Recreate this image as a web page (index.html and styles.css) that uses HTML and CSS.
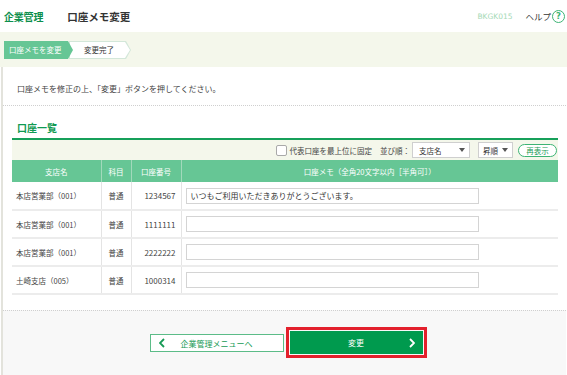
FILE: index.html
```html
<!DOCTYPE html>
<html lang="ja">
<head>
<meta charset="utf-8">
<title>口座メモ変更</title>
<link rel="stylesheet" href="styles.css">
</head>
<body>
<header class="top">
  <span class="brand">企業管理</span>
  <span class="title">口座メモ変更</span>
  <span class="code">BKGK015</span>
  <span class="help">ヘルプ<span class="help-icon">?</span></span>
</header>
<div class="band">
  <ol class="steps">
    <li class="step step-cur">口座メモを変更</li>
    <li class="step step-next"><span class="step-in">変更完了</span></li>
  </ol>
</div>
<main class="page">
  <p class="lead">口座メモを修正の上、「変更」ボタンを押してください。</p>
  <section class="list">
    <h2 class="list-title">口座一覧</h2>
    <div class="tools">
      <span class="check"></span>
      <span class="check-label">代表口座を最上位に固定</span>
      <span class="sort-label">並び順：</span>
      <span class="select select-wide">支店名<span class="caret"></span></span>
      <span class="select select-narrow">昇順<span class="caret"></span></span>
      <span class="pill">再表示</span>
    </div>
    <table class="accounts">
      <thead>
        <tr>
          <th class="c-branch">支店名</th>
          <th class="c-kind">科目</th>
          <th class="c-no">口座番号</th>
          <th class="c-memo">口座メモ（全角20文字以内［半角可］）</th>
        </tr>
      </thead>
      <tbody>
        <tr>
          <td class="c-branch">本店営業部（001）</td>
          <td class="c-kind">普通</td>
          <td class="c-no">1234567</td>
          <td class="c-memo"><input class="memo" type="text" value="いつもご利用いただきありがとうございます。"></td>
        </tr>
        <tr>
          <td class="c-branch">本店営業部（001）</td>
          <td class="c-kind">普通</td>
          <td class="c-no">1111111</td>
          <td class="c-memo"><input class="memo" type="text" value=""></td>
        </tr>
        <tr>
          <td class="c-branch">本店営業部（001）</td>
          <td class="c-kind">普通</td>
          <td class="c-no">2222222</td>
          <td class="c-memo"><input class="memo" type="text" value=""></td>
        </tr>
        <tr>
          <td class="c-branch">土崎支店（005）</td>
          <td class="c-kind">普通</td>
          <td class="c-no">1000314</td>
          <td class="c-memo"><input class="memo" type="text" value=""></td>
        </tr>
      </tbody>
    </table>
  </section>
  <div class="actions">
    <a class="btn btn-back" href="#">
      <svg class="chev" width="6" height="10" viewBox="0 0 6 10"><polyline points="5,1 1,5 5,9" fill="none" stroke="#169a55" stroke-width="1.8"/></svg>
      <span class="btn-text">企業管理メニューへ</span>
      <span></span>
    </a>
    <a class="btn btn-go" href="#">
      <span></span>
      <span class="btn-text">変更</span>
      <svg class="chev chev-r" width="6" height="10" viewBox="0 0 6 10"><polyline points="1,1 5,5 1,9" fill="none" stroke="#ffffff" stroke-width="1.8"/></svg>
    </a>
  </div>
</main>
</body>
</html>
```
FILE: styles.css
```css
* { box-sizing: border-box; }
html, body { margin: 0; padding: 0; }
body {
  width: 567px;
  height: 375px;
  overflow: hidden;
  background: #fff;
  font-family: "Noto Sans CJK JP", "Noto Sans", sans-serif;
  font-size: 8px;
  color: #444;
}

/* header */
.top {
  height: 32px;
  display: flex;
  align-items: center;
  padding: 0 2px 0 4px;
}
.brand {
  font-size: 10px;
  font-weight: bold;
  color: #0c8f4c;
  letter-spacing: -0.2px;
}
.title {
  margin-left: 24px;
  font-size: 10.5px;
  font-weight: bold;
  color: #333;
}
.code {
  margin-left: auto;
  font-family: "DejaVu Sans", sans-serif;
  font-size: 7.5px;
  color: #a4d9b5;
}
.help {
  margin-left: 13px;
  display: flex;
  align-items: center;
  font-size: 8.5px;
  color: #333;
}
.help-icon {
  margin-left: 1px;
  width: 13px;
  height: 13px;
  border: 1.5px solid #3db474;
  border-radius: 50%;
  color: #3db474;
  font-family: "DejaVu Sans", sans-serif;
  font-weight: bold;
  font-size: 8.5px;
  line-height: 10px;
  text-align: center;
}

/* breadcrumb band */
.band {
  height: 35px;
  background: #f4f7eb;
  padding: 9px 0 0 4px;
}
.steps {
  list-style: none;
  margin: 0;
  padding: 0;
  display: flex;
  height: 18px;
}
.step {
  height: 18px;
  line-height: 18px;
  font-size: 7.5px;
  clip-path: polygon(0 0, calc(100% - 5px) 0, 100% 50%, calc(100% - 5px) 100%, 0 100%);
}
.step-cur {
  position: relative;
  z-index: 1;
  width: 69px;
  padding-left: 5px;
  background: #66c695;
  color: #fff;
}
.step-next {
  width: 62px;
  margin-left: -4px;
  padding: 1px;
  background: #d3e7d9;
}
.step-in {
  display: block;
  height: 16px;
  line-height: 16px;
  padding-left: 14px;
  background: #fff;
  color: #333;
  clip-path: polygon(0 0, calc(100% - 5px) 0, 100% 50%, calc(100% - 5px) 100%, 0 100%);
}

/* page body */
.page {
  height: 308px;
  margin-left: 1px;
  width: 565px;
  border-left: 2px solid #e3e3dc;
  display: flex;
  flex-direction: column;
}
.lead {
  margin: 0;
  padding: 16px 0 10px 14px;
  line-height: 12px;
  font-size: 8px;
  color: #444;
  border-bottom: 1px dotted #cfcfcf;
}
.list {
  padding: 0 8px 0 9px;
}
.list-title {
  margin: 15px 0 3px;
  padding-left: 5px;
  font-size: 10px;
  line-height: 14px;
  font-weight: bold;
  color: #109a52;
}
.tools {
  border-top: 2px solid #17a05a;
  background: #f4f7eb;
  height: 22px;
  display: flex;
  align-items: center;
  justify-content: flex-end;
  padding-right: 1px;
  font-size: 7.5px;
  color: #444;
}
.check {
  width: 11px;
  height: 11px;
  border: 1px solid #a9a9a9;
  border-radius: 2px;
  background: #fff;
}
.check-label { margin-left: 3px; }
.sort-label { margin-left: 8px; }
.select {
  margin-left: 2px;
  height: 16px;
  border: 1px solid #cfcfcf;
  background: #fff;
  display: flex;
  align-items: center;
  padding-left: 6px;
  color: #333;
}
.select-wide { width: 58px; }
.select-narrow { width: 35px; margin-left: 8px; padding-left: 4px; }
.caret {
  margin-left: auto;
  margin-right: 4px;
  width: 0;
  height: 0;
  border-left: 3px solid transparent;
  border-right: 3px solid transparent;
  border-top: 4px solid #555;
}
.pill {
  margin-left: 5px;
  width: 39px;
  height: 13px;
  line-height: 11px;
  border: 1px solid #3db474;
  border-radius: 7px;
  background: #fff;
  color: #1a9a55;
  text-align: center;
}

/* table */
.accounts {
  width: 100%;
  border-collapse: collapse;
  table-layout: fixed;
}
.accounts th {
  height: 22px;
  background: #66c695;
  color: #fff;
  font-weight: normal;
  font-size: 7.5px;
  text-align: center;
  border-right: 1px solid #a2d9bb;
  padding: 0;
}
.accounts th:last-child { border-right: none; }
.accounts td {
  height: 28px;
  border-bottom: 2px solid #ececec;
  border-right: 1px solid #e4e4e4;
  font-size: 7.5px;
  color: #444;
  padding: 0;
}
.accounts td:last-child { border-right: none; }
.c-branch { width: 89px; }
td.c-branch { padding-left: 4px; }
.c-kind { width: 30px; text-align: center; }
.c-no { width: 50px; }
td.c-no { text-align: right; padding-right: 5px; font-size: 8px; }
td.c-memo { padding-left: 4px; }
.memo {
  display: block;
  width: 293px;
  height: 16px;
  margin: 0;
  border: 1px solid #d4d4d4;
  padding: 0 4px;
  font-family: "Noto Sans CJK JP", sans-serif;
  font-size: 8px;
  color: #333;
  background: #fff;
}

/* actions */
.actions {
  margin-top: auto;
  height: 65px;
  border-top: 1px dotted #cfcfcf;
  background: #f8f8f8;
  display: flex;
  justify-content: center;
  align-items: flex-start;
  padding: 22px 0 0 3px;
}
.btn {
  display: grid;
  grid-template-columns: 22px 1fr 22px;
  align-items: center;
  text-decoration: none;
  font-size: 8px;
}
.btn-back {
  width: 134px;
  height: 18px;
  margin-top: 1px;
  border: 1px solid #5cbc88;
  background: #fff;
  color: #169a55;
}
.btn-back .chev { margin-left: 8px; }
.btn-go {
  width: 133px;
  height: 23px;
  margin-top: -2px;
  margin-left: 6px;
  background: #009a4e;
  color: #fff;
  outline: 3px solid #e3202c;
  outline-offset: 1px;
}
.btn-text { text-align: center; }
.chev-r { justify-self: end; margin-right: 8px; }
```
